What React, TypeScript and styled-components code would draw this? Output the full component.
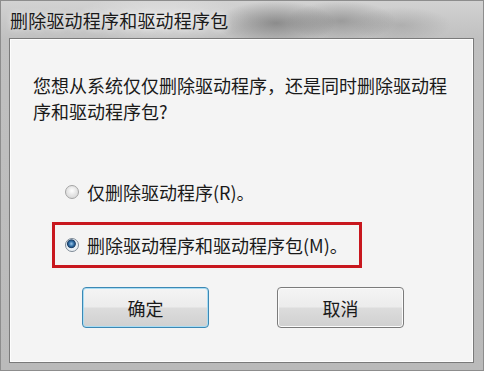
import React from "react";
import styled, { createGlobalStyle } from "styled-components";

const Global = createGlobalStyle`
  html, body { margin: 0; padding: 0; background: #c4c4c4; }
  body { font-family: "Noto Sans CJK SC", "Noto Sans", sans-serif; }
`;

const Window = styled.div`
  width: 484px;
  height: 371px;
  box-sizing: border-box;
  display: flex;
  flex-direction: column;
  background:
    radial-gradient(ellipse 60px 22px at 275px 22px, rgba(80,80,80,0.5), rgba(80,80,80,0) 100%),
    radial-gradient(ellipse 55px 20px at 340px 20px, rgba(100,100,100,0.45), rgba(100,100,100,0) 100%),
    radial-gradient(ellipse 50px 18px at 400px 24px, rgba(120,120,120,0.3), rgba(120,120,120,0) 100%),
    radial-gradient(ellipse 90px 24px at 160px 18px, rgba(255,255,255,0.45), rgba(255,255,255,0) 100%),
    linear-gradient(180deg, #d2d2d2 0px, #c0c0c0 38px, #bababa 100%);
  border: 1px solid #8d8d8d;
`;

const TitleBar = styled.div`
  height: 37px;
  display: flex;
  align-items: center;
  padding-left: 9px;
  font-size: 18px;
  color: #1a1a1a;
  letter-spacing: 0.2px;
  text-shadow: 0 0 6px rgba(255,255,255,0.8);
`;

const Panel = styled.div`
  flex: 1;
  margin: 0 9px 7px 8px;
  background: #f4f4f4;
  border: 1px solid #7a7a7a;
  box-shadow: inset 0 0 0 1px #fdfdfd;
  display: flex;
  flex-direction: column;
  padding: 33px 0 0 0;
`;

const Message = styled.div`
  padding: 0 20px 0 23px;
  font-size: 18px;
  line-height: 26px;
  color: #1a1a1a;
`;

const Options = styled.div`
  margin-top: 45px;
  padding-left: 42px;
  display: flex;
  flex-direction: column;
  gap: 7px;
`;

const OptionRow = styled.div<{ $highlight?: boolean }>`
  box-sizing: border-box;
  width: 310px;
  height: 46px;
  display: flex;
  align-items: center;
  gap: 8px;
  padding-left: 10px;
  border: 3px solid ${(p) => (p.$highlight ? "#c8171e" : "transparent")};
  font-size: 18px;
  color: #1a1a1a;
`;

const Radio = styled.span<{ $checked?: boolean }>`
  width: 14px;
  height: 14px;
  box-sizing: border-box;
  border-radius: 50%;
  border: 1px solid ${(p) => (p.$checked ? "#7d8a96" : "#a4a4a4")};
  background: ${(p) =>
    p.$checked
      ? "radial-gradient(circle at 45% 40%, #9cc6ea 0px, #2f6ea6 2.5px, #1c3f66 4px, #e6eef5 4.8px, #f6f6f6 100%)"
      : "radial-gradient(circle at 50% 40%, #ffffff 0px, #e8e8e8 4px, #d0d0d0 100%)"};
  flex: none;
`;

const Buttons = styled.div`
  margin-top: 19px;
  padding-left: 72px;
  display: flex;
  gap: 68px;
`;

const Button = styled.div<{ $focused?: boolean }>`
  box-sizing: border-box;
  width: 127px;
  height: 41px;
  border-radius: 4px;
  border: 1px solid ${(p) => (p.$focused ? "#3c88b4" : "#7b7b7b")};
  box-shadow: inset 0 0 0 1px ${(p) => (p.$focused ? "#a8dcf3" : "#fbfbfb")};
  background: linear-gradient(180deg, #f4f4f4 0%, #ececec 48%, #dcdcdc 52%, #d0d0d0 100%);
  display: flex;
  align-items: center;
  justify-content: center;
  font-size: 18px;
  color: #1a1a1a;
`;

export default function App() {
  return (
    <>
      <Global />
      <Window>
        <TitleBar>删除驱动程序和驱动程序包</TitleBar>
        <Panel>
          <Message>
            您想从系统仅仅删除驱动程序，还是同时删除驱动程序和驱动程序包?
          </Message>
          <Options>
            <OptionRow>
              <Radio />
              <span>仅删除驱动程序(R)。</span>
            </OptionRow>
            <OptionRow $highlight>
              <Radio $checked />
              <span>删除驱动程序和驱动程序包(M)。</span>
            </OptionRow>
          </Options>
          <Buttons>
            <Button $focused>确定</Button>
            <Button>取消</Button>
          </Buttons>
        </Panel>
      </Window>
    </>
  );
}
